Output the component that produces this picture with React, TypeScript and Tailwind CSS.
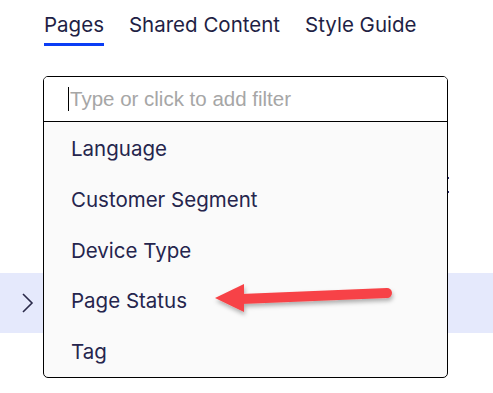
import React from 'react';

const tabs = ['Pages', 'Shared Content', 'Style Guide'];
const filters = ['Language', 'Customer Segment', 'Device Type', 'Page Status', 'Tag'];

const App: React.FC = () => {
  return (
    <div className="relative w-[493px] h-[393px] bg-white overflow-hidden font-['Inter',sans-serif] text-[#1f1f45]">
      {/* tabs */}
      <div className="flex gap-[25px] pl-[44px] pt-[9px] text-[20.5px]">
        {tabs.map((t, i) => (
          <div key={t} className="flex flex-col">
            <span className="leading-[31px]">{t}</span>
            <div className={`h-[3px] mt-[3px] ${i === 0 ? 'bg-[#0b3df5]' : ''}`} />
          </div>
        ))}
      </div>

      {/* page content behind */}
      <div className="mt-[227px] h-[60px] bg-[#e5e9fc] flex items-center pl-[20px]">
        <svg width="14" height="22" viewBox="0 0 14 22" fill="none">
          <path d="M3 2l9 9-9 9" stroke="#2a2a4a" strokeWidth="1.6" />
        </svg>
      </div>
      <div className="absolute left-[447px] top-[177px] flex flex-col gap-[12px]">
        <div className="w-[2px] h-[2px] bg-[#2a2a6a]" />
        <div className="w-[2px] h-[2px] bg-[#2a2a6a]" />
      </div>

      {/* filter dropdown */}
      <div className="absolute left-[43px] top-[76px] w-[405px] h-[302px] border border-black rounded-[5px] bg-[#fafafa] overflow-hidden">
        <div className="h-[45px] bg-white border-b border-black flex items-center pl-[24px]">
          <div className="w-px h-[24px] bg-black" />
          <span className="ml-[1px] text-[20.5px] text-[#a6a6a6] font-['Liberation_Sans',Arial,sans-serif]">
            Type or click to add filter
          </span>
        </div>
        <div className="flex flex-col pt-[2px]">
          {filters.map((f) => (
            <div key={f} className="h-[50.75px] flex items-center pl-[27px] text-[20.5px] text-[#25254d]">
              {f}
            </div>
          ))}
        </div>
      </div>

      {/* annotation arrow */}
      <svg className="absolute left-[205px] top-[278px]" width="195" height="45" viewBox="0 0 195 45">
        <defs>
          <filter id="sh" x="-10%" y="-30%" width="120%" height="160%">
            <feDropShadow dx="1" dy="3" stdDeviation="2" floodColor="#000" floodOpacity="0.3" />
          </filter>
        </defs>
        <g filter="url(#sh)">
          <path d="M36 21 L182 15" stroke="#f74346" strokeWidth="10" strokeLinecap="round" />
          <path d="M10 20 L39 6 L39 34 Z" fill="#f74346" />
        </g>
      </svg>
    </div>
  );
};

export default App;
